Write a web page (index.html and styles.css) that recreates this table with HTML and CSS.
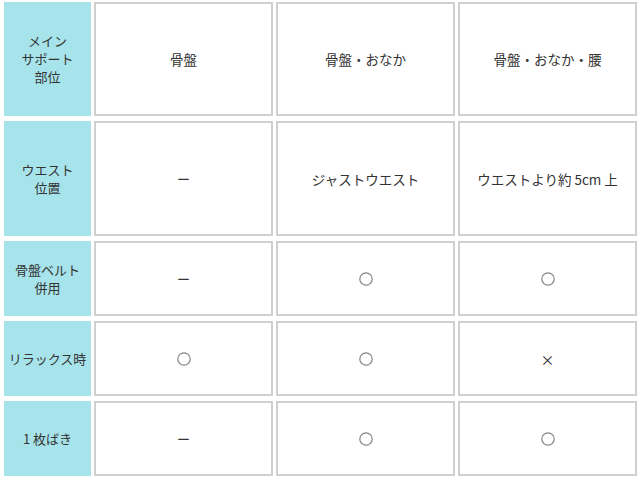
FILE: index.html
```html
<!DOCTYPE html>
<html lang="ja">
<head>
<meta charset="utf-8">
<title>比較表</title>
<link rel="stylesheet" href="styles.css">
</head>
<body>
<div class="table">
  <div class="head">メイン<br>サポート<br>部位</div>
  <div class="cell">骨盤</div>
  <div class="cell">骨盤・おなか</div>
  <div class="cell">骨盤・おなか・腰</div>

  <div class="head">ウエスト<br>位置</div>
  <div class="cell"><span class="dash">ー</span></div>
  <div class="cell">ジャストウエスト</div>
  <div class="cell">ウエストより約 5cm 上</div>

  <div class="head">骨盤ベルト<br>併用</div>
  <div class="cell"><span class="dash">ー</span></div>
  <div class="cell"><svg class="mark" viewBox="0 0 14 14" aria-label="○"><circle cx="7" cy="7" r="6.2"/></svg></div>
  <div class="cell"><svg class="mark" viewBox="0 0 14 14" aria-label="○"><circle cx="7" cy="7" r="6.2"/></svg></div>

  <div class="head">リラックス時</div>
  <div class="cell"><svg class="mark" viewBox="0 0 14 14" aria-label="○"><circle cx="7" cy="7" r="6.2"/></svg></div>
  <div class="cell"><svg class="mark" viewBox="0 0 14 14" aria-label="○"><circle cx="7" cy="7" r="6.2"/></svg></div>
  <div class="cell"><span class="cross">×</span></div>

  <div class="head">1 枚ばき</div>
  <div class="cell"><span class="dash">ー</span></div>
  <div class="cell"><svg class="mark" viewBox="0 0 14 14" aria-label="○"><circle cx="7" cy="7" r="6.2"/></svg></div>
  <div class="cell"><svg class="mark" viewBox="0 0 14 14" aria-label="○"><circle cx="7" cy="7" r="6.2"/></svg></div>
</div>
</body>
</html>
```
FILE: styles.css
```css
html, body {
  margin: 0;
  padding: 0;
  background: #ffffff;
}
body {
  font-family: "Noto Sans CJK JP", "Noto Sans", sans-serif;
  color: #333333;
}
.table {
  display: grid;
  grid-template-columns: 87px 179px 179px 179px;
  grid-template-rows: 114px 115px 75px 75px 75px;
  column-gap: 3px;
  row-gap: 5px;
  padding: 2px 0 0 4px;
}
.head {
  background: #a7e3ea;
  display: flex;
  align-items: center;
  justify-content: center;
  text-align: center;
  font-size: 13px;
  line-height: 18px;
  color: #333333;
}
.cell {
  border: 2px solid #cfcfcf;
  display: flex;
  align-items: center;
  justify-content: center;
  text-align: center;
  font-size: 13.5px;
  line-height: 18px;
  color: #333333;
}
.mark {
  width: 14px;
  height: 14px;
  fill: none;
  stroke: #858585;
  stroke-width: 1.2;
}
.cross {
  color: #333333;
  font-size: 14px;
}
.dash {
  color: #333333;
  font-size: 13px;
}
```
